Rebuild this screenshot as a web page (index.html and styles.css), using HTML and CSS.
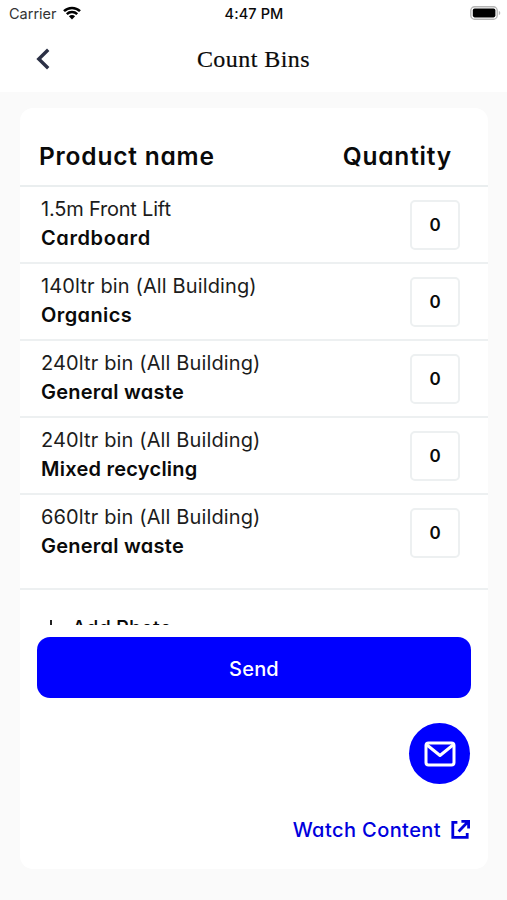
FILE: index.html
```html
<!DOCTYPE html>
<html lang="en">
<head>
    <meta charset="UTF-8">
    <meta name="viewport" content="width=device-width, initial-scale=1.0">
    <title>Count Bins</title>
    <link rel="stylesheet" href="styles.css">
</head>
<body>
    <!-- Status bar -->
    <div class="status-bar">
        <div class="carrier">
            <span class="carrier-name">Carrier</span>
            <svg class="wifi" viewBox="0 0 18 14" width="18" height="14">
                <path d="M1 5.2a11.3 11.3 0 0 1 16 0M3.8 8.1a7.4 7.4 0 0 1 10.4 0" fill="none" stroke="#000" stroke-width="2.5"/>
                <path d="M5.9 10.2a4.4 4.4 0 0 1 6.2 0L9 13.4z"/>
            </svg>
        </div>
        <span class="time">4:47 PM</span>
        <svg class="battery" viewBox="0 0 31 14" width="31" height="14">
            <rect x=".8" y=".8" width="26.4" height="12.4" rx="3.8" fill="#fff" stroke="#b5b5b5" stroke-width="1.4"/>
            <rect x="2.8" y="2.6" width="22.6" height="8.8" rx="1.8"/>
            <path d="M28.8 4.8c2 .8 2 3.6 0 4.4z" fill="#b5b5b5"/>
        </svg>
    </div>

    <!-- Navigation -->
    <div class="nav">
        <svg class="back" viewBox="0 0 14 22" width="14" height="22">
            <path d="M12.2 1.8L2.8 11l9.4 9.2" fill="none" stroke="#2b3045" stroke-width="3.4"/>
        </svg>
        <h1 class="title">Count Bins</h1>
    </div>

    <div class="page">
        <div class="card">
            <div class="list">
                <div class="list-header">
                    <span class="col-name">Product name</span>
                    <span class="col-qty">Quantity</span>
                </div>
                <div class="row">
                    <div class="product">
                        <p class="bin lift">1.5m Front Lift</p>
                        <p class="waste cardboard">Cardboard</p>
                    </div>
                    <div class="qty">0</div>
                </div>
                <div class="row">
                    <div class="product">
                        <p class="bin">140ltr bin (All Building)</p>
                        <p class="waste organics">Organics</p>
                    </div>
                    <div class="qty">0</div>
                </div>
                <div class="row">
                    <div class="product">
                        <p class="bin">240ltr bin (All Building)</p>
                        <p class="waste">General waste</p>
                    </div>
                    <div class="qty">0</div>
                </div>
                <div class="row">
                    <div class="product">
                        <p class="bin">240ltr bin (All Building)</p>
                        <p class="waste">Mixed recycling</p>
                    </div>
                    <div class="qty">0</div>
                </div>
                <div class="row last">
                    <div class="product">
                        <p class="bin">660ltr bin (All Building)</p>
                        <p class="waste">General waste</p>
                    </div>
                    <div class="qty">0</div>
                </div>
                <div class="add-photo">
                    <svg class="plus" viewBox="0 0 16 16" width="16" height="16">
                        <path d="M8 0v16M0 8h16" stroke="#222" stroke-width="2"/>
                    </svg>
                    <span class="add-label">Add Photo</span>
                </div>
            </div>

            <button class="btn-send">Send</button>

            <div class="actions">
                <button class="btn-mail">
                    <svg viewBox="0 0 32 26" width="32" height="26">
                        <rect x="2" y="2" width="28" height="22" rx="2.6" fill="none" stroke="#fff" stroke-width="3"/>
                        <path d="M3 4l13 10.5L29 4" fill="none" stroke="#fff" stroke-width="3" stroke-linejoin="round"/>
                    </svg>
                </button>
                <a class="watch" href="#">
                    <span class="watch-label">Watch Content</span>
                    <svg class="external" viewBox="0 0 20 20" width="20" height="20">
                        <path d="M7.4 2.4H2.8v15h14.4V13M8.6 11.4L18 1.8M11.4 1.4h7.2v7.2" fill="none" stroke="#00d" stroke-width="2.8"/>
                    </svg>
                </a>
            </div>
        </div>
    </div>
</body>
</html>
```
FILE: styles.css
```css
* {
    box-sizing: border-box;
}

body {
    margin: 0;
    height: 900px;
    display: flex;
    flex-direction: column;
    overflow: hidden;
    background: #fff;
    color: #0a0a0a;
    font-family: Inter, "Open Sans", sans-serif;
    font-feature-settings: "cv11"; /* single-storey a */
}

p, h1 {
    margin: 0;
}

button {
    border: none;
    padding: 0;
    font: inherit;
    font-feature-settings: inherit;
    cursor: pointer;
}

/* Status bar */
.status-bar {
    height: 28px;
    display: grid;
    grid-template-columns: 1fr auto 1fr;
    align-items: center;
    padding: 0 6px 2px 9px;
    font-feature-settings: normal;
}

.carrier {
    display: flex;
    align-items: center;
    gap: 6px;
}

.carrier-name {
    font-size: 14.5px;
    color: #333;
}

.time {
    margin-right: 2px;
    font-size: 14.5px;
    font-weight: 500;
    letter-spacing: 0.1px;
}

.battery {
    justify-self: end;
}

/* Navigation */
.nav {
    height: 64px;
    flex: none;
    display: grid;
    grid-template-columns: 1fr auto 1fr;
    align-items: center;
    padding: 0 36px 2px;
}

.title {
    font-family: "Liberation Serif", serif;
    font-size: 24px;
    font-weight: 400;
    letter-spacing: 0.45px;
    -webkit-text-stroke: 0.2px #0a0a0a;
}

.page {
    flex: 1;
    padding: 16px 19px 31px 20px;
    background: #fafafa;
}

.card {
    height: 761px;
    background: #fff;
    border-radius: 13px;
}

/* Bin list */
.list {
    height: 517px;
    overflow: hidden;
}

.list-header {
    height: 79px;
    display: flex;
    justify-content: space-between;
    padding: 33px 36px 0 19px;
    border-bottom: 2px solid #eaeeef;
    font-size: 24.5px;
    line-height: 30px;
    font-weight: 600;
    letter-spacing: 0.8px;
}

.row {
    height: 77px;
    display: flex;
    justify-content: space-between;
    padding: 13px 28px 0 21px;
    border-bottom: 2px solid #edf0f1;
}

.row.last {
    height: 95px;
}

.product {
    margin-top: -5px;
}

.bin {
    font-size: 20px;
    line-height: 29px;
    letter-spacing: 0.13px;
    color: #1c1c1c;
}

.bin.lift {
    letter-spacing: -0.2px;
}

.waste {
    font-size: 20px;
    line-height: 28px;
    font-weight: 600;
    letter-spacing: 0.25px;
}

.waste.cardboard {
    letter-spacing: 0.6px;
}

.waste.organics {
    letter-spacing: 0.4px;
}

.qty {
    width: 50px;
    height: 50px;
    display: flex;
    align-items: center;
    justify-content: center;
    border: 2px solid #edf0f1;
    border-radius: 5px;
    font-size: 17px;
    font-weight: 600;
}

.add-photo {
    display: flex;
    align-items: center;
    gap: 13px;
    padding: 23px 0 0 23px;
    font-size: 20px;
    line-height: 30px;
    font-weight: 500;
}

/* Buttons */
.btn-send {
    display: block;
    width: 434px;
    height: 61px;
    margin: 12px 0 0 17px;
    padding-top: 2px;
    border-radius: 13px;
    background: #00f;
    color: #fff;
    font-size: 20px;
    font-weight: 500;
    letter-spacing: 0.2px;
}

.actions {
    display: flex;
    flex-direction: column;
    align-items: flex-end;
    padding: 25px 18px 0 0;
}

.btn-mail {
    width: 61px;
    height: 61px;
    display: flex;
    align-items: center;
    justify-content: center;
    border-radius: 50%;
    background: #00f;
}

.watch {
    display: flex;
    align-items: center;
    gap: 9px;
    margin-top: 31px;
    color: #00d;
    font-size: 20px;
    line-height: 30px;
    font-weight: 500;
    letter-spacing: 0.42px;
    text-decoration: none;
}
```
